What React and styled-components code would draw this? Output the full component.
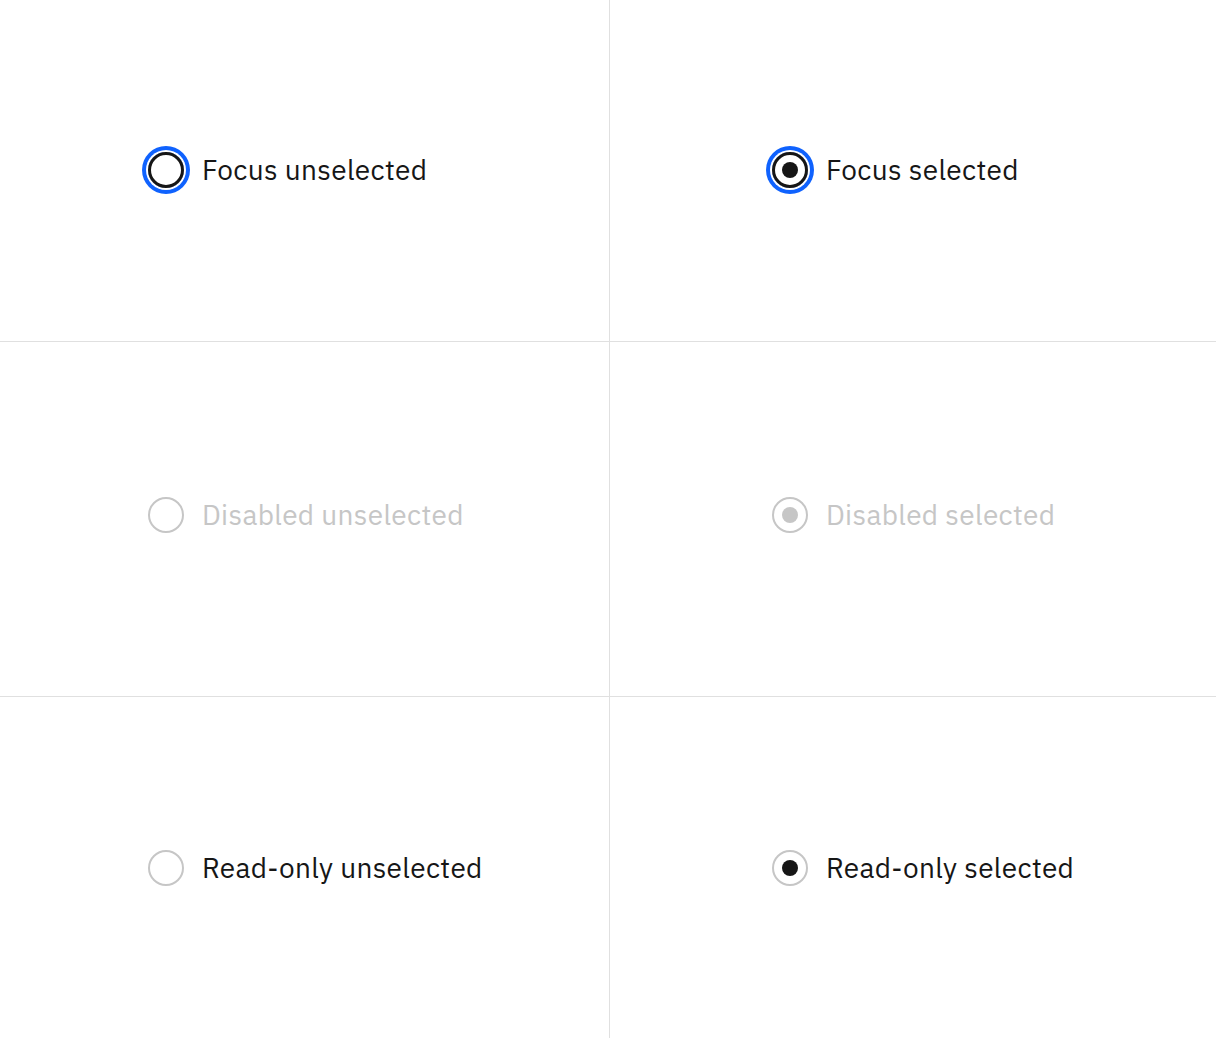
import React from "react";
import styled, { createGlobalStyle, css } from "styled-components";

const Global = createGlobalStyle`
  html, body { margin: 0; padding: 0; background: #ffffff; }
  body { font-family: "IBM Plex Sans", Inter, "Noto Sans", sans-serif; color: #161616; }
  * { box-sizing: border-box; }
`;

const Board = styled.div`
  display: grid;
  grid-template-columns: 610px 606px;
  grid-template-rows: 342px 355px 341px;
  width: 1216px;
  height: 1038px;
`;

const Cell = styled.div`
  display: flex;
  align-items: center;
  padding-left: ${(p) => p.$inset}px;
  padding-bottom: ${(p) => p.$lift || 0}px;
  border-right: ${(p) => (p.$right ? "none" : "1px solid #e0e0e0")};
  border-bottom: ${(p) => (p.$last ? "none" : "1px solid #e0e0e0")};
`;

const Label = styled.label`
  display: inline-flex;
  align-items: center;
  gap: 18px;
  font-size: 28px;
  line-height: 36px;
  letter-spacing: 0.32px;
  color: ${(p) => (p.$disabled ? "#c6c6c6" : "#161616")};
`;

const Circle = styled.span`
  position: relative;
  flex: none;
  width: 36px;
  height: 36px;
  border-radius: 50%;
  border: 2px solid ${(p) => (p.$muted ? "#c6c6c6" : "#161616")};
  ${(p) =>
    p.$focus &&
    css`
      box-shadow: 0 0 0 2px #ffffff, 0 0 0 6px #0f62fe;
      border-width: 3px;
    `}
  &::after {
    content: "";
    display: ${(p) => (p.$checked ? "block" : "none")};
    position: absolute;
    left: 50%;
    top: 50%;
    width: 16px;
    height: 16px;
    margin: -8px 0 0 -8px;
    border-radius: 50%;
    background: ${(p) => (p.$dim ? "#c6c6c6" : "#161616")};
  }
`;

function Radio({ text, checked, focus, disabled, readOnly }) {
  return (
    <Label $disabled={disabled}>
      <Circle
        $checked={checked}
        $focus={focus}
        $muted={disabled || readOnly}
        $dim={disabled}
      />
      <span>{text}</span>
    </Label>
  );
}

export default function App() {
  return (
    <>
      <Global />
      <Board>
        <Cell $inset={148} $lift={1}>
          <Radio text="Focus unselected" focus />
        </Cell>
        <Cell $inset={162} $right $lift={1}>
          <Radio text="Focus selected" focus checked />
        </Cell>
        <Cell $inset={148} $lift={8}>
          <Radio text="Disabled unselected" disabled />
        </Cell>
        <Cell $inset={162} $right $lift={8}>
          <Radio text="Disabled selected" disabled checked />
        </Cell>
        <Cell $inset={148} $last>
          <Radio text="Read-only unselected" readOnly />
        </Cell>
        <Cell $inset={162} $right $last>
          <Radio text="Read-only selected" readOnly checked />
        </Cell>
      </Board>
    </>
  );
}
